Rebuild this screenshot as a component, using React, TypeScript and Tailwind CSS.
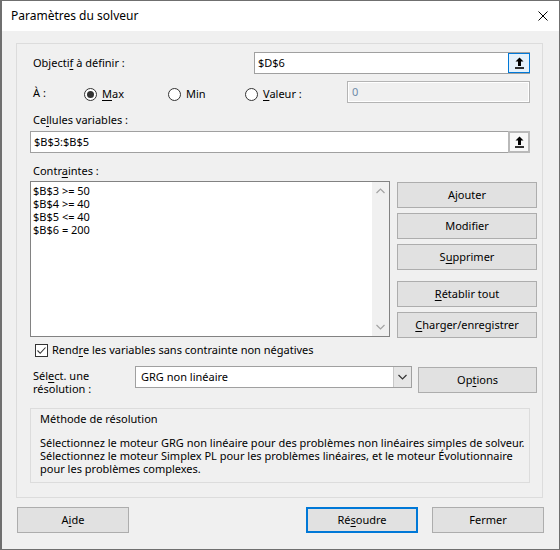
import type { ReactNode } from 'react';

const font = "font-['Noto_Sans',sans-serif] text-[11px] text-black";

function Key({ children }: { children: ReactNode }) {
  return <span className="underline underline-offset-2">{children}</span>;
}

function CollapseIcon() {
  return (
    <svg width="9" height="12" viewBox="0 0 9 12">
      <path d="M4.5 0.5 L0.5 4.5 H3 V9 H6 V4.5 H8.5 Z" fill="#000" />
      <rect x="0" y="10.2" width="9" height="1.6" fill="#000" />
    </svg>
  );
}

function Radio({ checked }: { checked?: boolean }) {
  return (
    <span className="w-[13px] h-[13px] rounded-full border border-[#333] bg-white flex items-center justify-center">
      {checked && <span className="w-[7px] h-[7px] rounded-full bg-[#333]" />}
    </span>
  );
}

function Button({ children, focused, className = '' }: { children: ReactNode; focused?: boolean; className?: string }) {
  return (
    <div
      className={`flex items-center justify-center bg-[#e1e1e1] ${
        focused ? 'border-2 border-[#0078d7]' : 'border border-[#adadad]'
      } ${className}`}
    >
      {children}
    </div>
  );
}

function Chevron({ up, color }: { up?: boolean; color: string }) {
  return (
    <svg width="9" height="6" viewBox="0 0 9 6">
      <path
        d={up ? 'M0.5 5 L4.5 1 L8.5 5' : 'M0.5 1 L4.5 5 L8.5 1'}
        stroke={color}
        strokeWidth="1.2"
        fill="none"
      />
    </svg>
  );
}

export default function App() {
  return (
    <div className={`w-[560px] h-[550px] bg-[#f0f0f0] border border-[#6f6f6f] border-l-2 flex flex-col ${font}`}>
      {/* Title bar */}
      <div className="h-[30px] bg-white flex items-center justify-between pl-[9px] pr-[11px] shrink-0 text-[12px]">
        <span>Paramètres du solveur</span>
        <svg width="10" height="10" viewBox="0 0 10 10">
          <path d="M0.5 0.5 L9.5 9.5 M9.5 0.5 L0.5 9.5" stroke="#000" strokeWidth="1" />
        </svg>
      </div>

      {/* Main panel */}
      <div className="ml-[14px] mt-[12px] w-[527px] h-[455px] border border-[#dcdcdc] flex flex-col shrink-0">
        {/* Objectif */}
        <div className="flex items-center h-[22px] mt-[8px] pl-[16px]">
          <span className="w-[221px]">
            Objecti<Key>f</Key> à définir :
          </span>
          <div className="w-[276px] h-[22px] border border-[#a0a0a0] bg-white flex items-center">
            <span className="flex-1 pl-[3px]">$D$6</span>
            <div className="w-[22px] h-[20px] -mr-px border border-[#0078d7] bg-[#e5f1fb] flex items-center justify-center">
              <CollapseIcon />
            </div>
          </div>
        </div>

        {/* À */}
        <div className="flex items-start h-[22px] mt-[7px] pl-[16px]">
          <span className="w-[51px] h-[22px] flex items-center pt-[3px]">À :</span>
          <div className="w-[84px] h-[22px] flex items-center gap-[5px] pt-[4px]">
            <Radio checked />
            <span>
              <Key>M</Key>ax
            </span>
          </div>
          <div className="w-[77px] h-[22px] flex items-center gap-[5px] pt-[4px]">
            <Radio />
            <span>Min</span>
          </div>
          <div className="w-[102px] h-[22px] flex items-center gap-[5px] pt-[4px]">
            <Radio />
            <span>
              <Key>V</Key>aleur :
            </span>
          </div>
          <div className="w-[183px] h-[22px] border border-[#b4b4b4] bg-white p-px">
            <div className="h-full bg-[#f0f0f0] pl-[3px] text-[#6d8aa8] leading-[18px]">0</div>
          </div>
        </div>

        {/* Cellules variables */}
        <div className="h-[16px] mt-[9px] pl-[16px] leading-[16px]">
          Ce<Key>l</Key>lules variables :
        </div>
        <div className="ml-[13px] mt-[3px] w-[500px] h-[22px] border border-[#a0a0a0] bg-white flex items-center">
          <span className="flex-1 pl-[3px]">$B$3:$B$5</span>
          <div className="w-[22px] h-[22px] -mr-px border-2 border-[#b9b9b9] bg-[#f7f7f7] flex items-center justify-center">
            <CollapseIcon />
          </div>
        </div>

        {/* Contraintes */}
        <div className="h-[16px] mt-[10px] pl-[16px] leading-[16px]">
          Contr<Key>a</Key>intes :
        </div>
        <div className="flex mt-[2px] pl-[13px]">
          <div className="w-[360px] h-[156px] border border-[#828282] bg-white flex">
            <div className="flex-1 pl-[2px] pt-[2px] leading-[13px]">
              <div>$B$3 &gt;= 50</div>
              <div>$B$4 &gt;= 40</div>
              <div>$B$5 &lt;= 40</div>
              <div>$B$6 = 200</div>
            </div>
            <div className="w-[17px] bg-[#f0f0f0] flex flex-col items-center justify-between py-[6px]">
              <Chevron up color="#a3a3a3" />
              <Chevron color="#a3a3a3" />
            </div>
          </div>
          <div className="ml-[7px] w-[140px] flex flex-col mt-px">
            <Button className="h-[26px]">
              <span>
                A<Key>j</Key>outer
              </span>
            </Button>
            <Button className="h-[26px] mt-[5px]">Modifier</Button>
            <Button className="h-[26px] mt-[5px]">
              <span>
                S<Key>u</Key>pprimer
              </span>
            </Button>
            <Button className="h-[26px] mt-[11px]">
              <span>
                <Key>R</Key>établir tout
              </span>
            </Button>
            <Button className="h-[26px] mt-[5px]">
              <span>
                <Key>C</Key>harger/enregistrer
              </span>
            </Button>
          </div>
        </div>

        {/* Checkbox */}
        <div className="flex items-center mt-[6px] pl-[18px] h-[13px] gap-[4px]">
          <span className="w-[13px] h-[13px] border border-[#333] bg-white flex items-center justify-center">
            <svg width="11" height="11" viewBox="0 0 11 11">
              <path d="M1.5 5.5 L4.2 8.3 L9.5 2.5" stroke="#333" strokeWidth="1.1" fill="none" />
            </svg>
          </span>
          <span>
            Rend<Key>r</Key>e les variables sans contrainte non négatives
          </span>
        </div>

        {/* Méthode */}
        <div className="flex mt-[9px] pl-[16px] h-[27px]">
          <div className="w-[102px] leading-[13px] pt-[3px]">
            <div>
              Sél<Key>e</Key>ct. une
            </div>
            <div>résolution :</div>
          </div>
          <div className="w-[277px] h-[22px] border border-[#a0a0a0] bg-white flex items-center">
            <span className="flex-1 pl-[5px]">GRG non linéaire</span>
            <div className="w-[18px] h-full bg-[#e6e6e6] border-l border-[#c8c8c8] flex items-center justify-center">
              <Chevron color="#333" />
            </div>
          </div>
          <Button className="ml-[6px] mt-px w-[119px] h-[26px]">
            <span>
              Op<Key>t</Key>ions
            </span>
          </Button>
        </div>

        {/* Group box */}
        <div className="ml-[13px] mt-[15px] w-[500px] h-[75px] border border-[#dcdcdc] pl-[9px] pt-[2px]">
          <div className="leading-[16px]">Méthode de résolution</div>
          <div className="mt-[9px] leading-[13px] whitespace-nowrap">
            Sélectionnez le moteur GRG non linéaire pour des problèmes non linéaires simples de solveur.
            <br />
            Sélectionnez le moteur Simplex PL pour les problèmes linéaires, et le moteur Évolutionnaire
            <br />
            pour les problèmes complexes.
          </div>
        </div>
      </div>

      {/* Bottom buttons */}
      <div className="flex mt-[9px] pl-[15px]">
        <Button className="w-[112px] h-[26px]">
          <span>
            A<Key>i</Key>de
          </span>
        </Button>
        <Button focused className="ml-[177px] w-[112px] h-[26px]">
          <span>
            Ré<Key>s</Key>oudre
          </span>
        </Button>
        <Button className="ml-[14px] w-[112px] h-[26px]">Fermer</Button>
      </div>
    </div>
  );
}
